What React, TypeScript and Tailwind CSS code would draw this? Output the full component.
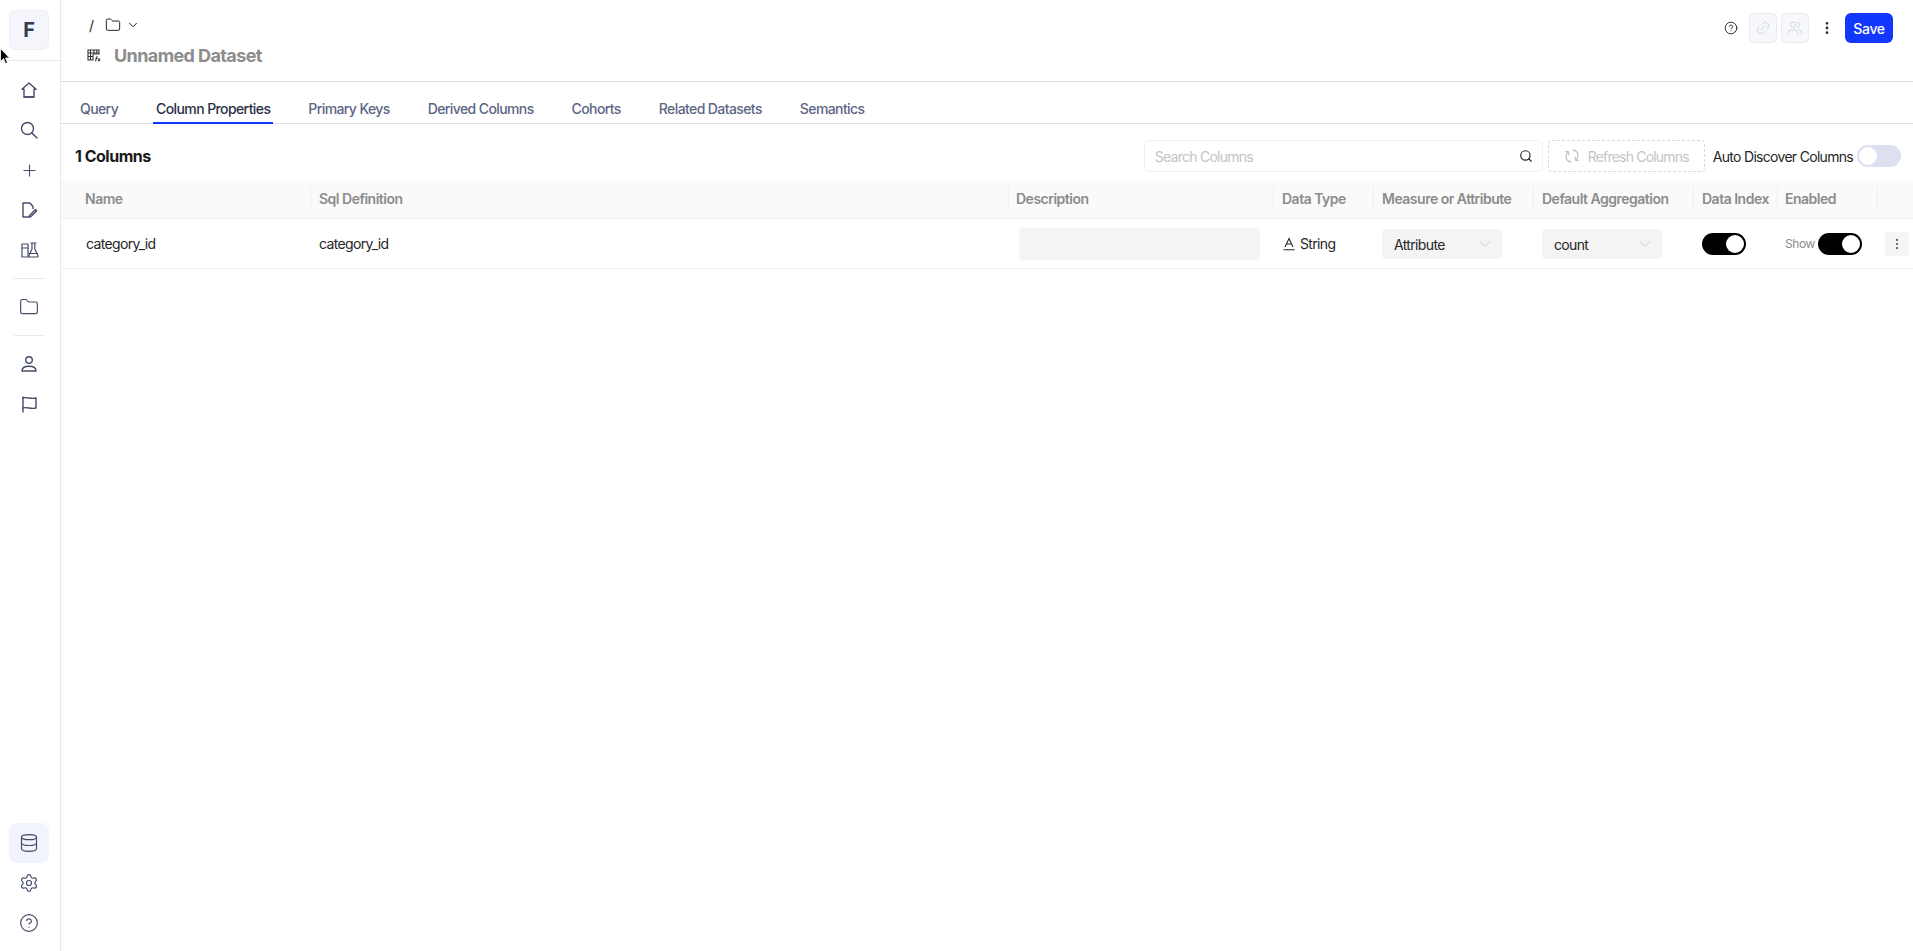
import type { ReactNode } from "react";
import { ChevronDown, Folder, Plus, Search, Settings, CircleHelp, Database, Link2, Users, EllipsisVertical } from "lucide-react";

const TABS = ["Query", "Column Properties", "Primary Keys", "Derived Columns", "Cohorts", "Related Datasets", "Semantics"];

const COLS = "grid grid-cols-[249px_698px_265px_100px_160px_160px_84px_100px_36px]";

const HEADERS = ["Name", "Sql Definition", "Description", "Data Type", "Measure or Attribute", "Default Aggregation", "Data Index", "Enabled", ""];

function Svg({ children, className = "w-5 h-5" }: { children: ReactNode; className?: string }) {
  return (
    <svg viewBox="0 0 20 20" fill="none" stroke="currentColor" strokeWidth="1.4" strokeLinecap="round" strokeLinejoin="round" className={className}>
      {children}
    </svg>
  );
}

function NavIcon({ children }: { children: ReactNode }) {
  return <div className="ml-[9px] flex h-10 w-10 items-center justify-center text-[#454c69]">{children}</div>;
}

function Toggle({ on }: { on: boolean }) {
  return (
    <div className={`flex h-[22px] w-[44px] items-center rounded-full p-[2px] ${on ? "justify-end bg-black" : "justify-start bg-[#dde1ef]"}`}>
      <div className="h-[18px] w-[18px] rounded-full bg-white" />
    </div>
  );
}

function Select({ value }: { value: string }) {
  return (
    <div className="flex h-[30px] w-[120px] items-center justify-between rounded bg-[#f4f4f4] pl-3 pr-[8px] text-[14px] text-[#262626]">
      <span className="pt-[1px]">{value}</span>
      <ChevronDown className="h-[18px] w-[18px] text-[#c4c4c4]" strokeWidth={1.1} />
    </div>
  );
}

function Sidebar() {
  return (
    <aside className="flex h-full w-[61px] shrink-0 flex-col border-r border-[#e6e9f4]">
      <div className="flex h-[61px] w-full items-center border-b border-[#e6e9f4] pl-[9px]">
        <div className="flex h-10 w-10 items-center justify-center rounded-md border border-[#eef0f8] bg-[#f5f6fb] text-[20px] font-bold text-[#333a52]">F</div>
      </div>
      <div className="mt-[9px] flex flex-col">
        <NavIcon>
          <Svg>
            <path d="M3 9.2 10 3l7 6.200h-2V17H5V9.200H3Z" />
            <path d="M5 17h10" />
          </Svg>
        </NavIcon>
        <NavIcon>
          <Svg>
            <circle cx="8.500" cy="8.500" r="6" />
            <path d="m13 13 5 5" />
          </Svg>
        </NavIcon>
        <NavIcon>
          <Plus className="h-[19px] w-[19px]" strokeWidth={1.4} />
        </NavIcon>
        <NavIcon>
          <Svg>
            <path d="M9 17H4V3h7l3 3.500v2" />
            <path d="m10.500 15.500 6-6 1.200 1.200-6 6-1.800.6.600-1.800Z" />
          </Svg>
        </NavIcon>
        <NavIcon>
          <Svg>
            <path d="M9 4H3v13h6V4Z" strokeWidth="1.2" />
            <path d="M3 8h6" strokeWidth="1.2" />
            <path d="M12 3h5M13 3v6l-3 6.500V17h9v-1.500L15.800 9V3" strokeWidth="1.2" />
            <path d="M10 13.500h8.500" strokeWidth="1.2" />
          </Svg>
        </NavIcon>
      </div>
      <div className="my-2 ml-[14px] h-px w-[31px] bg-[#e6e9f4]" />
      <NavIcon>
        <Folder className="h-5 w-5" strokeWidth={1.4} />
      </NavIcon>
      <div className="my-2 ml-[14px] h-px w-[31px] bg-[#e6e9f4]" />
      <NavIcon>
        <Svg>
          <circle cx="10" cy="6" r="3.300" />
          <path d="M3 17c0-3 2.500-4.700 7-4.700s7 1.700 7 4.700H3Z" />
        </Svg>
      </NavIcon>
      <NavIcon>
        <Svg>
          <path d="M4 18V3" />
          <path d="M4 4c4-1.500 8 1.600 13 0v10c-5 1.600-9-1.500-13 0" />
        </Svg>
      </NavIcon>
      <div className="mt-auto mb-[8px] flex flex-col">
        <div className="ml-[9px] flex h-10 w-10 items-center justify-center rounded-lg bg-[#f1f3fd] text-[#454c69]">
          <Database className="h-5 w-5" strokeWidth={1.4} />
        </div>
        <NavIcon>
          <Settings className="h-5 w-5" strokeWidth={1.4} />
        </NavIcon>
        <NavIcon>
          <CircleHelp className="h-5 w-5" strokeWidth={1.4} />
        </NavIcon>
      </div>
    </aside>
  );
}

function TopBar() {
  return (
    <header className="flex h-[82px] shrink-0 items-start justify-between border-b border-[#d9dce3] pl-[26px] pr-5">
      <div>
        <div className="mt-[15px] flex h-5 items-center text-[#262626]">
          <span className="ml-[2px] w-[16px] text-[14px]">/</span>
          <Folder className="h-4 w-4" strokeWidth={1.5} />
          <ChevronDown className="ml-[5px] h-[14px] w-[14px]" strokeWidth={1.7} />
        </div>
        <div className="mt-[7px] flex h-[26px] items-center">
          <svg viewBox="0 0 14 14" fill="none" stroke="#333" strokeWidth="1.100" className="h-[14px] w-[14px]">
            <path d="M1 2h11v4H6v6H1V2Z" />
            <path d="M1 5h11M1 8.500h5M3.500 2v10M7 2v3M9.800 2v3" />
            <path d="M8 13c1 0 1-1 1.300-3 .2-1 .6-1.500 1.400-1.500M8.500 10.500h2M11 10.500l2 2.500M13 10.500 11 13" />
          </svg>
          <span className="ml-[13px] text-[18px] font-bold tracking-[-0.6px] text-[#8c8c8c]">Unnamed Dataset</span>
        </div>
      </div>
      <div className="mt-[13px] flex h-[30px] items-center">
        <CircleHelp className="h-[14px] w-[14px] text-[#2b2f3d]" strokeWidth={1.7} />
        <div className="ml-[11px] flex h-[30px] w-[28px] items-center justify-center rounded-md border border-[#e8eaf3] bg-[#f7f8fb] text-[#ced2e0]">
          <Link2 className="h-4 w-4 -rotate-45" strokeWidth={1.4} />
        </div>
        <div className="ml-1 flex h-[30px] w-[28px] items-center justify-center rounded-md border border-[#e8eaf3] bg-[#f7f8fb] text-[#ced2e0]">
          <Users className="h-4 w-4" strokeWidth={1.4} />
        </div>
        <EllipsisVertical className="ml-[10px] h-4 w-4 text-[#2b2f3d]" strokeWidth={2.2} />
        <button type="button" className="ml-[10px] flex h-[30px] w-[48px] items-center justify-center rounded-md bg-[#1238ff] text-[14px] font-medium tracking-[-0.3px] text-white">
          Save
        </button>
      </div>
    </header>
  );
}

function Tabs() {
  return (
    <nav className="flex h-[42px] shrink-0 items-stretch gap-[32px] border-b border-[#dfe2ee] pl-4 text-[14px] font-medium tracking-[-0.6px] text-[#5c6584]">
      {TABS.map((t) => (
        <div key={t} className={`-mb-px flex items-center border-b-2 px-[3px] pt-[12px] ${t === "Column Properties" ? "border-[#1238ff] text-[#2a2f45]" : "border-transparent"}`}>
          {t}
        </div>
      ))}
    </nav>
  );
}

function Toolbar() {
  return (
    <div className="flex h-[56px] shrink-0 items-center pl-[14px] pr-[12px] pt-[8px]">
      <span className="text-[16px] font-bold tracking-[-0.5px] text-[#1a1a1a]">1 Columns</span>
      <div className="ml-auto flex h-8 w-[399px] items-center justify-between rounded-md border border-[#f0f0f0] pl-[10px] pr-[9px]">
        <span className="text-[14px] tracking-[-0.75px] text-[#c4c4c4]">Search Columns</span>
        <Search className="h-[14px] w-[14px] text-[#262626]" strokeWidth={2} />
      </div>
      <div className="ml-[5px] flex h-8 w-[157px] items-center justify-center gap-[8px] rounded border border-dashed border-[#d9d9d9] text-[14px] tracking-[-0.8px] text-[#c4c4c4]">
        <svg viewBox="0 0 16 16" fill="none" stroke="currentColor" strokeWidth="1.300" strokeLinecap="round" strokeLinejoin="round" className="h-4 w-4">
          <path d="M6.500 14C3.500 13.300 1.800 10.900 2 8c.2-1.700 1-3.100 2.300-4" />
          <path d="M1.800 3.500 4.500 4 4.800 6.600" />
          <path d="M9.500 2c3 .7 4.700 3.100 4.500 6-.2 1.700-1 3.100-2.300 4" />
          <path d="M14.200 12.500 11.500 12l-.3-2.600" />
        </svg>
        <span>Refresh Columns</span>
      </div>
      <span className="ml-2 text-[14px] tracking-[-0.7px] text-[#262626]">Auto Discover Columns</span>
      <div className="ml-1">
        <Toggle on={false} />
      </div>
    </div>
  );
}

function Table() {
  return (
    <div>
      <div className={`${COLS} h-[39px] items-center border-b border-[#f0f0f0] bg-[#fafafa] text-[14px] font-semibold tracking-[-0.5px] text-[#8c8c8c]`}>
        {HEADERS.map((h, i) => (
          <div key={i} className={`flex h-[24px] items-center pb-[1px] ${i === 0 ? "pl-[24px]" : i === 2 || i === 7 ? "border-l border-[#f0f0f0] pl-[7px]" : "border-l border-[#f0f0f0] pl-2"}`}>
            {h}
          </div>
        ))}
      </div>
      <div className={`${COLS} h-[50px] items-center border-b border-[#f0f0f0] text-[14px] tracking-[-0.65px] text-[#262626]`}>
        <div className="pl-[25px]">category_id</div>
        <div className="pl-[9px]">category_id</div>
        <div className="pl-[11px]">
          <div className="h-8 w-[241px] rounded bg-[#f4f4f4]" />
        </div>
        <div className="flex items-center pl-[9px]">
          <svg viewBox="0 0 14 14" fill="none" stroke="#262626" strokeWidth="1.100" className="mr-[4px] h-[14px] w-[14px]">
            <path d="M3 10 7 1.500 11 10M4.500 7h5M1.500 12.800h11" />
          </svg>
          String
        </div>
        <div className="pl-[9px]">
          <Select value="Attribute" />
        </div>
        <div className="pl-[9px]">
          <Select value="count" />
        </div>
        <div className="pl-[9px]">
          <Toggle on />
        </div>
        <div className="flex items-center pl-[8px]">
          <span className="mr-[3px] text-[12px] tracking-[-0.4px] text-[#8c8c8c]">Show</span>
          <Toggle on />
        </div>
        <div className="pl-[8px]">
          <div className="flex h-6 w-6 items-center justify-center rounded bg-[#f5f5f5]">
            <EllipsisVertical className="h-[14px] w-[14px] text-[#595959]" strokeWidth={1.8} />
          </div>
        </div>
      </div>
    </div>
  );
}

export default function App() {
  return (
    <div className="relative flex h-screen w-full overflow-hidden bg-white font-['Inter',sans-serif]">
      <Sidebar />
      <main className="flex min-w-0 flex-1 flex-col">
        <TopBar />
        <Tabs />
        <Toolbar />
        <Table />
      </main>
      {/* mouse cursor caught in the capture */}
      <svg viewBox="0 0 11 17" className="absolute left-0 top-[48px] h-[17px] w-[11px]">
        <path d="M0.500 0.500v13l3-3 2 5 2-1-2-4.500h4L0.500 0.500Z" fill="#000" stroke="#fff" strokeWidth="0.800" />
      </svg>
    </div>
  );
}
